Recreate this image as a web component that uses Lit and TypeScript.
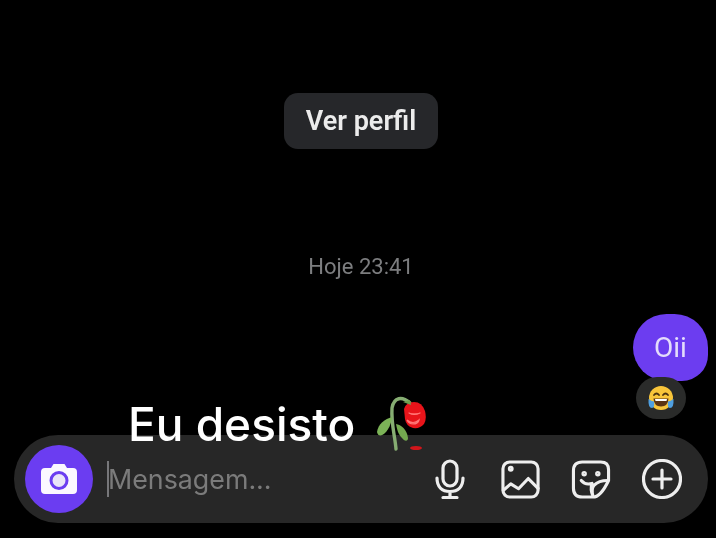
import { LitElement, html, css } from "lit";
import { customElement } from "lit/decorators.js";

@customElement("app-root")
export class AppRoot extends LitElement {
  static styles = css`
    :host { display: block; width: 716px; height: 538px; background: #000; position: relative; overflow: hidden; font-family: Inter, Roboto, "Liberation Sans", sans-serif; }
    .page { height: 538px; box-sizing: border-box; display: flex; flex-direction: column; padding: 93px 8px 15px 14px; }
    .profile-row { display: flex; justify-content: center; height: 56px; }
    .profile { width: 154px; height: 56px; box-sizing: border-box; border-radius: 14px; background: #26272a; color: #ececec; font: 600 27px Roboto, sans-serif; display: flex; align-items: center; justify-content: center; filter: blur(0.6px); }
    .time { margin-top: 105px; height: 25px; text-align: center; color: #7c7d7f; font: 400 22px/25px Roboto, sans-serif; filter: blur(0.5px); }
    .thread { margin-top: 35px; display: flex; flex-direction: column; align-items: flex-end; }
    .bubble { width: 75px; height: 67px; border-radius: 36px 36px 28px 36px; background: #6c3df0; color: #e4dcfb; display: flex; align-items: center; justify-content: center; font: 400 28px Roboto, sans-serif; filter: blur(0.5px); }
    .reaction { margin-top: -4px; margin-right: 22px; width: 50px; height: 42px; border-radius: 21px; background: #2a2b2a; display: flex; align-items: center; justify-content: center; filter: blur(0.4px); }
    .bar { margin-top: 16px; height: 88px; border-radius: 44px; background: #272727; display: flex; align-items: center; padding: 0 26px 0 11px; filter: blur(0.5px); }
    .camera { width: 68px; height: 68px; border-radius: 50%; background: #6b3df1; display: flex; align-items: center; justify-content: center; flex: none; }
    .input { flex: 1; margin-left: 14px; display: flex; align-items: center; color: #7b7b7b; font: 400 26.800px Inter, Roboto, sans-serif; }
    .caret { width: 2px; height: 36px; background: #77777a; margin-right: -1px; }
    .icons { display: flex; align-items: center; gap: 31px; }
    .icons svg { display: block; }
    .mic { margin-right: 5px; }
    .caption { position: absolute; left: 128px; top: 396px; color: #fff; font: 500 46px Inter, Roboto, sans-serif; white-space: nowrap; filter: blur(0.4px); }
    .rose { position: absolute; left: 372px; top: 394px; filter: blur(0.5px); }
  `;

  render() {
    const st = "fill:none;stroke:#eeeeee;stroke-width:3.2;stroke-linecap:round;stroke-linejoin:round";
    return html`
      <div class="page">
        <div class="profile-row"><div class="profile">Ver perfil</div></div>
        <div class="time">Hoje 23:41</div>
        <div class="thread">
          <div class="bubble">Oii</div>
          <div class="reaction">
            <svg width="28" height="28" viewBox="0 0 28 28">
              <circle cx="14" cy="14" r="12" fill="#f8c53a" />
              <path d="M7 11q2.500-3 5 0M16 11q2.500-3 5 0" fill="none" stroke="#4a3210" stroke-width="1.800" stroke-linecap="round" />
              <path d="M6.500 14.500h15q-.5 8-7.500 8t-7.500-8z" fill="#5b3312" />
              <path d="M8 15h12l-.5 2h-11z" fill="#fff" />
              <path d="M1.500 15q3 2 5.500 2.500q1 6-2 6.500q-4 0-3.500-9zM26.500 15q-3 2-5.500 2.500q-1 6 2 6.500q4 0 3.500-9z" fill="#4f9fe0" />
            </svg>
          </div>
        </div>
        <div class="bar">
          <div class="camera">
            <svg width="38" height="32" viewBox="0 0 38 32">
              <path fill="#fbf8ff" d="M5 5h6l2.500-4h11l2.500 4h6q4 0 4 4v18q0 4-4 4H5q-4 0-4-4V9q0-4 4-4z" />
              <circle cx="19" cy="17.500" r="8" fill="#e9e5f7" stroke="#6b3df1" stroke-width="3" />
            </svg>
          </div>
          <div class="input"><span class="caret"></span><span>Mensagem...</span></div>
          <div class="icons">
            <svg class="mic" width="30" height="40" viewBox="0 0 30 40"><g style=${st}>
              <rect x="8" y="2" width="14" height="25" rx="7" />
              <path d="M2 19c0 9 5 13.500 13 13.500S28 28 28 19M15 33v5M8 38.500h14" />
            </g></svg>
            <svg width="39" height="39" viewBox="0 0 40 40"><g style=${st}>
              <rect x="2" y="2" width="36" height="36" rx="7" />
              <circle cx="10" cy="9" r="1.400" />
              <path d="M2.500 31l7.500-6.500l8 5l10-10.500l10 10" />
            </g></svg>
            <svg width="40" height="39" viewBox="0 0 40 40"><g style=${st}>
              <path d="M11 2h19q8 0 8 8v11Q30 38 22 38H11q-9 0-9-9V11q0-9 9-9z" />
              <path d="M10 21q4 5 11 3q-2 6 1 13M37 21q-9 0-14 5q-3 4-1 11" />
              <circle cx="13" cy="14" r="1.200" /><circle cx="27" cy="14" r="1.200" />
            </g></svg>
            <svg width="40" height="40" viewBox="0 0 40 40"><g style=${st}>
              <circle cx="20" cy="20" r="18.500" />
              <path d="M20 11v18M11 20h18" />
            </g></svg>
          </div>
        </div>
      </div>
      <div class="caption">Eu desisto</div>
      <svg class="rose" width="56" height="60" viewBox="0 0 56 60">
        <path d="M24 55C23 42 19 30 20 14C22 3 30 2 38 9" fill="none" stroke="#86ad72" stroke-width="3.400" stroke-linecap="round" />
        <path d="M20 23C13 25 6 30 5 38C6 43 10 42 13 39C17 35 19 30 20 23z" fill="#7cb357" />
        <path d="M24 30C29 31 35 35 36 44C36 48 32 47 30 44C26 40 25 35 24 30z" fill="#73a94f" />
        <path d="M32 15q2-7 10-7q8 0 11 9q2 8-1 13q-4 5-11 4q-7-2-8-9z" fill="#e8141a" />
        <path d="M35 26q6 5 12 0q-1 4-6 4q-4 0-6-4zM37 19q5 3 11 0" fill="#f55" stroke="#f77" stroke-width="1.200" stroke-linecap="round" />
        <path d="M31 8l7-2l1 5z" fill="#6f9f50" />
        <ellipse cx="44" cy="54" rx="6" ry="2" fill="#d1161b" />
      </svg>
    `;
  }
}
